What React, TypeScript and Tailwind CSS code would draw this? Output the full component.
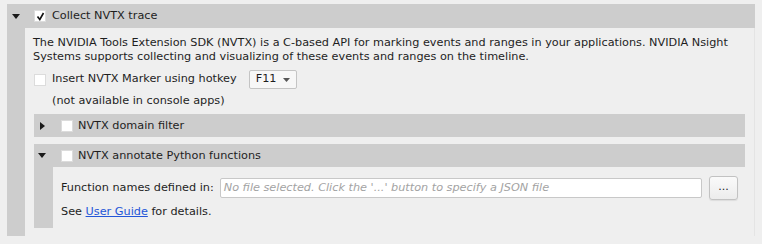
const FONT = "font-['DejaVu_Sans',sans-serif]"

function Arrow({ open }: { open: boolean }) {
  return open ? (
    <svg width="8" height="5" viewBox="0 0 8 5" className="block">
      <path d="M0 0 L8 0 L4 5 Z" fill="#1a1a1a" />
    </svg>
  ) : (
    <svg width="5" height="8" viewBox="0 0 5 8" className="block">
      <path d="M0 0 L5 4 L0 8 Z" fill="#1a1a1a" />
    </svg>
  )
}

function Check({ checked }: { checked?: boolean }) {
  return (
    <span className="w-[12px] h-[12px] bg-white border border-[#dcdcdc] flex items-center justify-center shrink-0">
      {checked && (
        <svg width="9" height="9" viewBox="0 0 9 9">
          <path d="M1.5 4.5 L3.8 7.5 L7.5 1" stroke="#111" strokeWidth="1.6" fill="none" />
        </svg>
      )}
    </span>
  )
}

function SubHeader({ open, label }: { open: boolean; label: string }) {
  return (
    <div className="h-[23px] bg-[#cdcdcd] flex items-center">
      <span className={`w-[27px] flex ${open ? 'pl-[4px]' : 'pl-[6px]'}`}>
        <Arrow open={open} />
      </span>
      <Check />
      <span className="ml-[5px] pt-[1px]">{label}</span>
    </div>
  )
}

export default function App() {
  return (
    <div className={`w-[762px] h-[244px] bg-[#efefef] pt-[4px] px-[7px] text-[11.25px] text-[#1e1e1e] ${FONT}`}>
      {/* Collect NVTX trace */}
      <div className="h-[24px] bg-[#cdcdcd] flex items-center">
        <span className="w-[27px] flex pl-[5px]">
          <Arrow open />
        </span>
        <Check checked />
        <span className="ml-[6px] pt-[1px]">Collect NVTX trace</span>
      </div>
      <div className="flex h-[208px]">
        <div className="w-[18px] bg-[#cdcdcd]" />
        <div className="flex-1 px-[9px] pt-[8px] border-r border-[#e4e4e4]">
          <p className="leading-[14px] -ml-[1px]">
            The NVIDIA Tools Extension SDK (NVTX) is a C-based API for marking events and ranges in your applications. NVIDIA Nsight Systems supports collecting and visualizing of these events and ranges on the timeline.
          </p>
          <div className="flex items-center mt-[6px] h-[19px]">
            <Check />
            <span className="ml-[6px]">Insert NVTX Marker using hotkey</span>
            <div className="ml-[12px] h-[19px] w-[48px] border border-[#c4c4c4] rounded-[2px] bg-[#f7f7f7] flex items-center px-[6px]">
              <span>F11</span>
              <svg width="7" height="4" viewBox="0 0 7 4" className="ml-auto">
                <path d="M0 0 L7 0 L3.5 4 Z" fill="#555" />
              </svg>
            </div>
          </div>
          <p className="ml-[18px] mt-[5px] leading-[14px]">(not available in console apps)</p>
          <div className="mt-[6px]">
            <SubHeader open={false} label="NVTX domain filter" />
          </div>
          <div className="mt-[7px]">
            <SubHeader open label="NVTX annotate Python functions" />
            <div className="flex h-[61px]">
              <div className="w-[19px] bg-[#cdcdcd]" />
              <div className="flex-1 pl-[8px] pr-[7px] pt-[9px]">
                <div className="flex items-center h-[24px]">
                  <span>Function names defined in:</span>
                  <div className="ml-[6px] flex-1 h-[20px] bg-white border border-[#c8c8c8] rounded-[2px] flex items-center px-[3px] italic text-[#a3a3a3]">
                    No file selected. Click the '...' button to specify a JSON file
                  </div>
                  <button className="ml-[7px] w-[29px] h-[24px] border border-[#c2c2c2] rounded-[3px] bg-gradient-to-b from-[#fafafa] to-[#ececec] text-[11px] leading-none pb-[3px] shadow-[0_1px_1px_rgba(0,0,0,0.08)]">
                    ...
                  </button>
                </div>
                <p className="mt-[2px] leading-[20px]">
                  See <span className="text-[#2456d8] underline">User Guide</span> for details.
                </p>
              </div>
            </div>
          </div>
        </div>
      </div>
    </div>
  )
}
